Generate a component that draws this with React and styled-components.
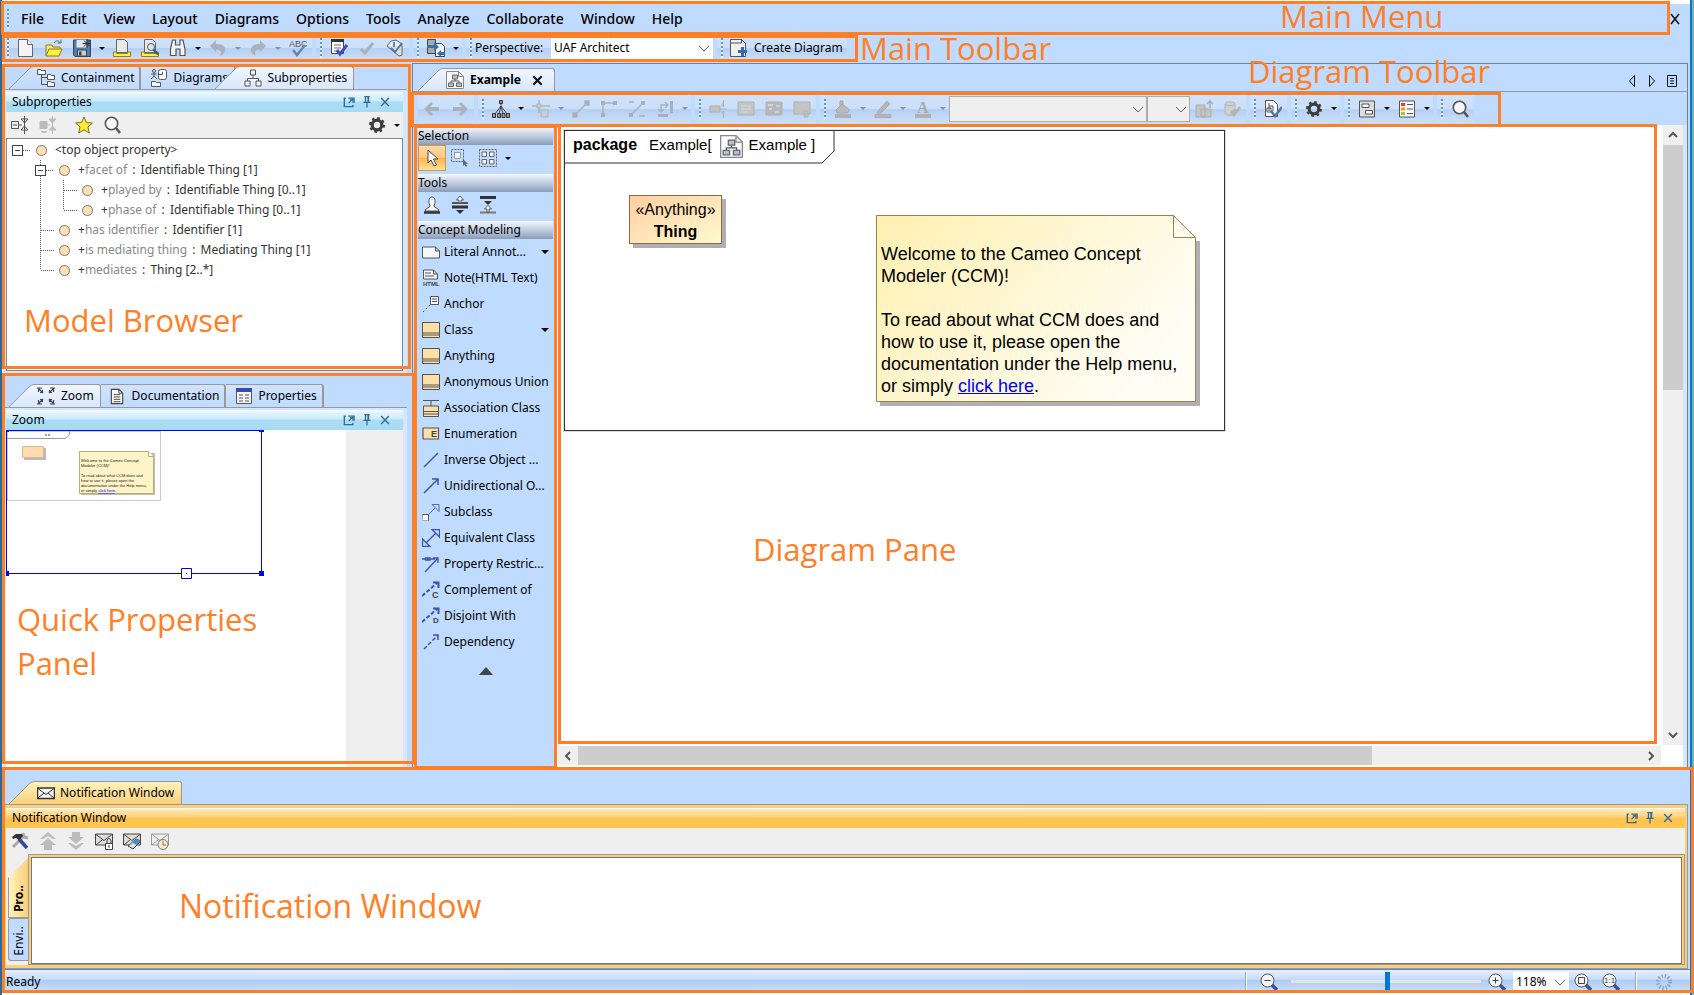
import React from "react";
import styled, { createGlobalStyle, css } from "styled-components";

const ORANGE = "#ff7f27";
const BLUE = "#bfdbff";

const GlobalStyle = createGlobalStyle`
  * {
    box-sizing: border-box;
  }

  body {
    margin: 0;
    background: #fff;
    color: #000;
    font-family: "Noto Sans", "Open Sans", sans-serif;
    font-size: 12px;
    line-height: 16px;
  }

  button, select, input {
    font: inherit;
    color: inherit;
    border-radius: 0;
  }

  svg {
    display: block;
    flex: none;
  }
`;

/* ---------- icons ---------- */

const icons = {
  newFile: (
    <>
      <path d="M1.500 .5h9l5 5v12h-14z" fill="#f4f4f4" stroke="#666" />
      <path d="M10.500 .5v5h5" fill="#fff" stroke="#666" />
    </>
  ),
  open: (
    <>
      <path d="M1 17V6h6l1 2h7v3" fill="#f7ea6a" stroke="#8a7b20" />
      <path d="M1 17l3-7h13l-3 7z" fill="#fff03c" stroke="#8a7b20" />
      <path d="M9 4c2-3 5-3 6 0M12.500 4H16V.5" fill="none" stroke="#666" />
    </>
  ),
  save: (
    <>
      <path d="M.5 1h17v16.500H2L.5 16z" fill="#4d7fb5" stroke="#444" />
      <rect x="3.500" y="1" width="10" height="7.500" fill="#e6e6e6" />
      <rect x="4.500" y="11" width="9" height="6" fill="#ccc" stroke="#444" />
      <rect x="6" y="12.500" width="2.500" height="4" fill="#444" />
      <path d="M14 0v9M9.500 4.500h9M11 1.500l6 6M17 1.500l-6 6" stroke="#333" />
    </>
  ),
  print: (
    <>
      <path d="M3.500 .5h8l3 3v10h-11z" fill="#e9e9e9" stroke="#666" />
      <path d="M.5 13h3v1.500h11V13h3v4.500H.5z" fill="#fff13c" stroke="#8f8420" />
    </>
  ),
  preview: (
    <>
      <path d="M3.500 .5h8l3 3v10h-11z" fill="#e9e9e9" stroke="#666" />
      <path d="M.5 13h3v1.500h11V13h3v4.500H.5z" fill="#fff13c" stroke="#8f8420" />
      <circle cx="10" cy="8" r="3.500" fill="#d5ecff" stroke="#555" />
      <path d="M12.500 10.500l4.500 5" stroke="#34598c" strokeWidth="2.500" />
    </>
  ),
  binoculars: (
    <path
      d="M3.500 1h3v5h4.500V1h3l2 9v6.500h-5V10h-4v6.500H1.500V10z"
      fill="#f4f4f4"
      stroke="#555"
      strokeWidth="1.200"
    />
  ),
  undo: (
    <path d="M1 7l6-6v4c7 0 10 3 9 7-1 3-3 4-5 5 2-3 1-7-4-6.500V13z" fill="#aab2bd" />
  ),
  redo: (
    <path d="M17 7l-6-6v4C4 5 1 8 2 12c1 3 3 4 5 5-2-3-1-7 4-6.500V13z" fill="#aab2bd" />
  ),
  spell: (
    <>
      <text x="0" y="8" fontSize="9" fill="#555" fontFamily="Liberation Sans, sans-serif">ABC</text>
      <path d="M4 11l4 5 8-10" fill="none" stroke="#5e87b5" strokeWidth="2.500" />
    </>
  ),
  notepad: (
    <>
      <path d="M1.500 1.500h12v13h-12z" fill="#fff" stroke="#444" />
      <path d="M1 1.500h13" stroke="#333" strokeWidth="3" />
      <path d="M4 6h7M4 9h7M4 12h4" stroke="#666" />
      <path d="M7 11l3 4 7-9" fill="none" stroke="#3f51c0" strokeWidth="3" />
    </>
  ),
  check: <path d="M3 10l4 4 8-10" fill="none" stroke="#aab2bd" strokeWidth="3" />,
  validate: (
    <>
      <path d="M1 7l4-5 5-1 6 4-1 5-5 3z" fill="#eee" stroke="#666" />
      <path d="M1 7l12 10 3-1V7" fill="#ddd" stroke="#666" />
      <path d="M5 9l4 4 7-9" fill="none" stroke="#4c78a8" strokeWidth="2" />
      <path d="M8 3v5" stroke="#3f51c0" strokeWidth="1.500" />
    </>
  ),
  exchange: (
    <>
      <path d="M.5 .5h8v14h-8z" fill="#aaa" stroke="#444" />
      <path d="M8.500 4.500h6l3 3v10h-9z" fill="#f4f4f4" stroke="#444" />
      <path d="M0 6h7V3l5 5-5 4v-3H0z" fill="#2f74b5" />
      <path d="M18 13h-4v-2l-4 3.500 4 3.500v-2h4z" fill="#2f74b5" />
    </>
  ),
  createDiagram: (
    <>
      <path d="M.5 .5h11l4 4v13H.5z" fill="#eee" stroke="#555" />
      <path d="M.5 4h11V.5l4 4" fill="none" stroke="#555" />
      <path d="M12.500 8v9M8 12.500h9" stroke="#2f6fb0" strokeWidth="3" />
    </>
  ),
  containment: (
    <>
      <path d="M4.500 6v9.500h6M4.500 8.500h6" fill="none" stroke="#555" />
      <path d="M.5 .5h3l1 1h4v4h-8zM10.500 5.500h3l1 1h3v4h-7zM10.500 12.500h3l1 1h3v4h-7z" fill="#fff" stroke="#555" />
    </>
  ),
  diagrams: (
    <>
      <circle cx="4" cy="2" r="1.500" fill="none" stroke="#555" />
      <path d="M4 4v3M1 5h6M1 10l3-3 3 3" fill="none" stroke="#555" />
      <path d="M1.500 12.500h4l1 1h4v4h-9z" fill="#fff" stroke="#555" />
      <rect x="8.500" y=".5" width="8" height="10" rx="2" fill="#fff" stroke="#555" />
      <path d="M8.500 5.500h4V3" fill="none" stroke="#555" />
    </>
  ),
  hierarchy: (
    <path
      d="M6.500 1h5v5h-5zM1 12h5v5H1zM12 12h5v5h-5zM9 6v3.500M3.500 12V9.500h11V12"
      fill="#f4f4f4"
      stroke="#555"
    />
  ),
  collapse: (
    <>
      <path d="M.5 5.500h7v7h-7zM2 9h4M8 9h3" fill="none" stroke="#555" />
      <path d="M13.500 0v18M10 3h7l-3.500 4zM10 14h7l-3.500-4z" fill="#fff" stroke="#555" />
    </>
  ),
  collapseOff: (
    <>
      <path d="M1 5.500h7v7H1zM8 9h3M2 15c2 2 5 2 6 0" fill="#bbb" stroke="#bbb" />
      <path d="M13.500 0v18M10 3h7l-3.500 4zM10 14h7l-3.500-4z" fill="#bbb" stroke="#bbb" />
    </>
  ),
  star: (
    <path
      d="M9 1l2.400 5.600 6 .5-4.500 4 1.400 6L9 13.800 3.700 17l1.400-6-4.500-4 6-.5z"
      fill="#ffeb3b"
      stroke="#76701c"
    />
  ),
  search: (
    <>
      <circle cx="8.500" cy="7.500" r="6.200" fill="#f8f8f8" stroke="#555" strokeWidth="1.600" />
      <path d="M13 12l4 5" stroke="#555" strokeWidth="2.500" />
    </>
  ),
  gear: (
    <>
      <circle cx="9" cy="9" r="4.800" fill="none" stroke="#3d3d3d" strokeWidth="3.200" />
      <circle cx="9" cy="9" r="7" fill="none" stroke="#3d3d3d" strokeWidth="2" strokeDasharray="2.700 2.800" />
    </>
  ),
  zoomArrows: (
    <path
      d="M0 1h5M1.500 1v4M2 2l4 4M3 5.500h2.500V3M18 1h-5M16.500 1v4M16 2l-4 4M15 5.500h-2.500V3M0 17h5M1.500 17v-4M2 16l4-4M3 12.500h2.500V15M18 17h-5M16.500 17v-4M16 16l-4-4M15 12.500h-2.500V15"
      fill="none"
      stroke="#444"
      strokeWidth="1.200"
    />
  ),
  document: (
    <>
      <path d="M2.500 1.500h8l4 4v11h-12z" fill="#f8f8f8" stroke="#444" strokeWidth="1.200" />
      <path d="M10.500 1.500v4h4M5 7h7M5 9.500h7M5 12h7M5 14.500h7" fill="none" stroke="#444" />
    </>
  ),
  propTable: (
    <>
      <path d="M1.500 1.500h15v15h-15z" fill="#f4f4f4" stroke="#555" />
      <path d="M1 3h16" stroke="#3848b0" strokeWidth="4" />
      <path d="M4 8h4M10 8h4M4 11h4M10 11h4M4 14h4M10 14h4" stroke="#555" />
    </>
  ),
  diagramFile: (
    <>
      <path d="M.5 .5h12l5 5v12H.5z" fill="#fafafa" stroke="#888" />
      <path d="M12.500 .5v5h5" fill="none" stroke="#888" />
      <path d="M9 8v2M5 12v-2h8v2" fill="none" stroke="#555" />
      <path d="M6.500 4h5v4h-5zM2.500 12h5v3.500h-5zM10.500 12h5v3.500h-5z" fill="#b9bedb" stroke="#666" />
    </>
  ),
  mail: (
    <>
      <path d="M.5 4h17v10.500H.5z" fill="#f4f4f4" stroke="#333" strokeWidth="1.500" />
      <path d="M1 4.500l8 6 8-6M1 14l6-5M17 14l-6-5" fill="none" stroke="#333" />
    </>
  ),
  mailLock: (
    <>
      <path d="M.5 2h17v11H.5z" fill="#ddd" stroke="#444" />
      <path d="M1 2.500l8 6 8-6M1 13l6-5" fill="none" stroke="#444" />
      <path d="M12 11V9c0-3 4-3 4 0v2" fill="none" stroke="#444" />
      <path d="M10.500 11.500h7v6h-7z" fill="#fff" stroke="#444" />
      <path d="M14 13v3" stroke="#444" />
    </>
  ),
  mailErase: (
    <>
      <path d="M.5 2h17v11H.5z" fill="#ddd" stroke="#444" />
      <path d="M1 2.500l8 6 8-6M1 13l6-5" fill="none" stroke="#444" />
      <path d="M5 14l8-7 5 2-8 8z" fill="#ddd" stroke="#444" />
      <path d="M9 10.500l4-3.500 4.500 2-4 4z" fill="#4a90d0" />
    </>
  ),
  mailClock: (
    <>
      <path d="M.5 2h17v11H.5z" fill="#eee" stroke="#999" />
      <path d="M1 2.500l8 6 8-6M1 13l6-5" fill="none" stroke="#999" />
      <circle cx="12" cy="12.500" r="5" fill="#ffe9c4" stroke="#777" />
      <path d="M12 9v4h3" fill="none" stroke="#777" />
    </>
  ),
  tools: (
    <>
      <path d="M2 15L14 3M12 1l1 4 4 1" stroke="#aaa" strokeWidth="3" fill="none" />
      <path d="M8 7l8 9" stroke="#35489c" strokeWidth="3.500" />
      <path d="M1 5l4-3h6l1 2-4 4-3-2-3 1z" fill="#333" />
    </>
  ),
  upDouble: <path d="M9 0l8 7h-3L9 4 4 7H1zM9 6l8 7h-4v5H5v-5H1z" fill="#bcbcbc" />,
  downDouble: <path d="M9 18l8-7h-3l-5 3-5-3H1zM9 12l8-7h-4V0H5v5H1z" fill="#bcbcbc" />,
  back: <path d="M1 9l7-7 2 2-3 3h9v4H7l3 3-2 2z" fill="#aab2bd" />,
  forward: <path d="M17 9l-7-7-2 2 3 3H2v4h9l-3 3 2 2z" fill="#aab2bd" />,
  layoutTree: (
    <>
      <path d="M9 3v3M9 6L3 14M9 6l-2 8M9 6l2 8M9 6l6 8" stroke="#444" />
      <path d="M7.500 .5h3v3h-3zM.5 13.500h3v4h-3zM5.500 13.500h3v4h-3zM10 13.500h3v4h-3zM14.500 13.500h3v4h-3z" fill="#999" stroke="#333" />
    </>
  ),
  snap: (
    <>
      <path d="M7 0v13M0 6h18" stroke="#aeb4bc" strokeWidth="1.500" />
      <path d="M9 10h7v7H9zM5 4h4v4H5z" fill="#c9ced6" stroke="#aeb4bc" />
    </>
  ),
  lineA: <path d="M3 15L14 4M1 13h4v4H1zM13 1h4v4h-4z" fill="#aab0b8" stroke="#aab0b8" strokeWidth="1.300" />,
  lineB: (
    <>
      <path d="M3 15V3h12" fill="none" stroke="#aab0b8" strokeWidth="1.500" />
      <path d="M1 1h4v4H1zM1 13h4v4H1zM13 1h4v4h-4z" fill="#aab0b8" />
    </>
  ),
  lineC: (
    <>
      <path d="M1 2h5M3 15L14 4M11 16h6" fill="none" stroke="#aab0b8" strokeWidth="1.500" />
      <path d="M1 13h4v4H1zM13 1h4v4h-4z" fill="#aab0b8" />
    </>
  ),
  lineD: (
    <>
      <path d="M5 12V5h6M9 2l3 3-3 3M2 9l3 3 3-3" fill="none" stroke="#aab0b8" strokeWidth="1.300" />
      <path d="M2 15.500h10M15.500 1v12" stroke="#aab0b8" strokeWidth="3" />
    </>
  ),
  resize: <path d="M1 6h10v6H1zM11 9h7M14.500 0v7l-2-2M14.500 18v-7l-2 2" fill="#c2c2c2" stroke="#b0b0b0" />,
  boxLines: (
    <>
      <path d="M1 2h16v13H1z" fill="#c4c4c4" stroke="#b0b0b0" />
      <path d="M4 6h10M4 9h10M4 12h7" stroke="#dadada" />
    </>
  ),
  boxImage: (
    <>
      <path d="M1 2h16v13H1z" fill="#b8b8b8" stroke="#b0b0b0" />
      <path d="M3 5h5M11 6h4M4 9h3M10 12h4" stroke="#d4d4d4" strokeWidth="2" />
    </>
  ),
  boxCorner: <path d="M1 2h16v12H1zM11 11h4v6h-4z" fill="#c4c4c4" stroke="#b0b0b0" />,
  bucket: (
    <>
      <path d="M2 10l6-6 8 6-3 3H3zM6 7V1h3v5" fill="#bcbcbc" stroke="#a8a8a8" />
      <path d="M1 14h16v4H1z" fill="#b0b0b0" />
    </>
  ),
  pen: <path d="M4 11L13 1l3 3-9 9H3zM1 14.500h16v3H1z" fill="#b6b6b6" stroke="#acacac" />,
  fontColor: (
    <>
      <path d="M1 14h16v4H1z" fill="#b0b0b0" />
      <text x="3" y="13" fontSize="16" fontWeight="700" fill="#a8a8a8" fontFamily="Liberation Serif, serif">A</text>
    </>
  ),
  copyStyle: (
    <>
      <path d="M1 5h9v12H1zM6 9h10v8H6z" fill="#c4c4c4" stroke="#acacac" />
      <path d="M15 8V2M12 4l3-3 3 3" fill="none" stroke="#acacac" strokeWidth="1.500" />
    </>
  ),
  pasteStyle: (
    <>
      <path d="M2 4c0-3 10-3 10 0v9c0 3-10 3-10 0z" fill="#d0d0d0" stroke="#b4b4b4" />
      <path d="M2 4c0 2 10 2 10 0" fill="none" stroke="#b4b4b4" />
      <path d="M7 12l4-3 2 1 3-4 2 2-3 4-4 5z" fill="#b4b4b4" />
    </>
  ),
  docCheck: (
    <>
      <path d="M1.500 .5h8l4 4v12h-12z" fill="#f7f7f7" stroke="#555" />
      <path d="M5 3v8M5 6h4v5M3 8h4v4H3z" fill="none" stroke="#555" />
      <path d="M7 11l4 5 7-9" fill="none" stroke="#4f79a8" strokeWidth="2.500" />
    </>
  ),
  panes: (
    <>
      <path d="M1.500 1h15v16h-15z" fill="#ddd" stroke="#555" />
      <path d="M4 4h7v3.500H4zM7.500 10.500h7V14h-7z" fill="#fff" stroke="#555" />
    </>
  ),
  legend: (
    <>
      <path d="M1.500 1h15v16h-15z" fill="#fafafa" stroke="#555" />
      <path d="M3 4.500h4" stroke="#f33" strokeWidth="3" />
      <path d="M3 9h4" stroke="#f90" strokeWidth="3" />
      <path d="M3 13.500h4" stroke="#9c3" strokeWidth="3" />
      <path d="M9 4.500h6M9 9h6M9 13.500h6" stroke="#555" />
    </>
  ),
  cursor: <path d="M5 1v13l3-3 3 6 2.500-1-3-6H15z" fill="#fff" stroke="#444" />,
  marquee: (
    <>
      <path d="M.5 .5h12v12H.5z" fill="none" stroke="#666" strokeDasharray="2 1" />
      <path d="M3.500 3.500h6v6h-6z" fill="#f4f4f4" stroke="#999" />
      <path d="M12 10v7l1.500-1.500L15 18l1-1-1-2h2z" fill="#666" />
    </>
  ),
  marqueeAll: (
    <>
      <path d="M.5 .5h17v17H.5z" fill="none" stroke="#666" strokeDasharray="2 1" />
      <path d="M3 3h4.500v4.500H3zM10.500 3H15v4.500h-4.500zM3 10.500h4.500V15H3zM10.500 10.500H15V15h-4.500z" fill="#f4f4f4" stroke="#666" />
    </>
  ),
  stamp: (
    <>
      <path d="M7 10c-5-12 9-12 4 0 0 2 5 2 5 5H2c0-3 5-3 5-5z" fill="#f4f4f4" stroke="#555" />
      <path d="M1 16.500h16" stroke="#333" strokeWidth="2.500" />
    </>
  ),
  spread: (
    <>
      <path d="M1 7h16" stroke="#555" strokeWidth="2" />
      <path d="M1 11h16" stroke="#333" strokeWidth="3" />
      <path d="M9 0L5.500 4H8v3h2V4h2.500z" fill="#fff" stroke="#555" />
      <path d="M5 14h8l-4 4z" fill="#333" />
    </>
  ),
  shrink: (
    <>
      <path d="M1 1.500h16" stroke="#333" strokeWidth="3" />
      <path d="M1 16.500h16" stroke="#777" strokeWidth="2" />
      <path d="M5 5h8L9 9z" fill="#333" />
      <path d="M9 9.500L5.500 13H8v3h2v-3h2.500z" fill="#fff" stroke="#555" />
    </>
  ),
  literal: <path d="M.5 4h13l4 4v7H.5zM13.500 4v4h4" fill="#f7f7f7" stroke="#555" />,
  htmlNote: (
    <>
      <path d="M1.500 1h10l4 4v5h-14zM11.500 1v4h4M3 4h6M3 7h9" fill="#f7f7f7" stroke="#555" />
      <text x="1" y="17" fontSize="6" fontWeight="700" fill="#444" fontFamily="Liberation Sans, sans-serif">HTML</text>
    </>
  ),
  anchor: (
    <>
      <path d="M8.500 1.500h8v8h-8zM10 4h5M10 6.500h5" fill="#f7f7f7" stroke="#555" />
      <path d="M1 17l8-8" stroke="#555" strokeDasharray="2 2" />
    </>
  ),
  classBox: (
    <>
      <path d="M.5 1.500h17v15H.5z" fill="#ffdfa8" stroke="#555" />
      <path d="M0 12h18M0 14h18" stroke="#555" />
    </>
  ),
  assocClass: (
    <>
      <path d="M1.500 7h15v10.500h-15z" fill="#ffdfa8" stroke="#555" />
      <path d="M1 12.500h16M1 15h16M1 1.500h16M9 1v6" stroke="#555" />
    </>
  ),
  enumeration: (
    <>
      <path d="M1 3h15.500v11H1z" fill="#ffdfa8" stroke="#555" strokeWidth="1.200" />
      <text x="9" y="12" fontSize="9" fontWeight="700" fill="#444" fontFamily="Liberation Sans, sans-serif">E</text>
    </>
  ),
  line: <path d="M2 16L16 2" stroke="#3f51b5" strokeWidth="1.500" />,
  arrow: <path d="M2 16L16 2M10 2h6v6" fill="none" stroke="#3f51b5" strokeWidth="1.500" />,
  subclass: (
    <>
      <path d="M5 13l8-8M10 1.500h7v7z" fill="none" stroke="#5565c0" />
      <path d="M.5 11.500h6v6h-6z" fill="#fff" stroke="#aaa" />
      <path d="M.5 11.500h6v6" fill="none" stroke="#555" />
    </>
  ),
  equivalent: <path d="M4 14L14 4M10 .5h7.500V8zM.5 10v7.500H8z" fill="none" stroke="#3f51b5" strokeWidth="1.300" />,
  restriction: <path d="M3 17L16 3M11 3h5v5M0 4h3M8 4h5M3.500 3h2v2h-2zM6 3h2v2H6z" fill="none" stroke="#3f51b5" strokeWidth="1.300" />,
  complement: (
    <>
      <path d="M0 15L15 2" stroke="#3f51b5" strokeWidth="2" strokeDasharray="4 2" />
      <path d="M11 1.500h5.500V7" fill="none" stroke="#3f51b5" strokeWidth="2" />
      <text x="10" y="17" fontSize="9" fontWeight="700" fill="#444" fontFamily="Liberation Sans, sans-serif">C</text>
    </>
  ),
  disjoint: (
    <>
      <path d="M0 15L15 2" stroke="#3f51b5" strokeWidth="2" strokeDasharray="4 2" />
      <path d="M11 1.500h5.500V7" fill="none" stroke="#3f51b5" strokeWidth="2" />
      <text x="11" y="16" fontSize="8" fontWeight="700" fill="#444" fontFamily="Liberation Sans, sans-serif">D</text>
    </>
  ),
  dependency: (
    <>
      <path d="M2 16L16 2" stroke="#3f51b5" strokeWidth="1.500" strokeDasharray="4 2" />
      <path d="M11 2h5v5" fill="none" stroke="#3f51b5" strokeWidth="1.500" />
    </>
  ),
  zoomOut: (
    <>
      <path d="M12 12l5 5" stroke="#3f51a0" strokeWidth="3.500" />
      <circle cx="7.500" cy="7.500" r="6.500" fill="#f4f4f4" stroke="#555" />
      <path d="M4.500 7.500h6" stroke="#444" />
    </>
  ),
  zoomIn: (
    <>
      <path d="M12 12l5 5" stroke="#3f51a0" strokeWidth="3.500" />
      <circle cx="7.500" cy="7.500" r="6.500" fill="#f4f4f4" stroke="#555" />
      <path d="M4.500 7.500h6M7.500 4.500v6" stroke="#444" />
    </>
  ),
  zoomFit: (
    <>
      <path d="M12 12l5 5" stroke="#3f51a0" strokeWidth="3.500" />
      <circle cx="7.500" cy="7.500" r="6.500" fill="#f4f4f4" stroke="#555" />
      <path d="M4.500 4.500h6v6h-6z" fill="none" stroke="#444" />
    </>
  ),
  zoomReal: (
    <>
      <path d="M12 12l5 5" stroke="#3f51a0" strokeWidth="3.500" />
      <circle cx="7.500" cy="7.500" r="6.500" fill="#f4f4f4" stroke="#555" />
      <text x="2" y="10" fontSize="8" fill="#444" fontFamily="Liberation Sans, sans-serif">1:1</text>
    </>
  ),
  spinner: (
    <circle cx="9" cy="9" r="6" fill="none" stroke="#8a9bb8" strokeWidth="4" strokeDasharray="1.200 1.950" />
  ),
  float: (
    <>
      <path d="M5 4H3v11h11v-2" fill="none" stroke="#2f6d98" strokeWidth="1.800" />
      <path d="M8 4h7.500v6" fill="none" stroke="#2f6d98" strokeWidth="1.800" />
      <path d="M8.500 10.500L14 5M10 6h4v4" stroke="#1f5d88" strokeWidth="1.300" fill="none" />
    </>
  ),
  pin: (
    <>
      <path d="M5.500 2h7M7 2v7M11 2v7M4.500 9.500h9M9 10v6" stroke="#2f6d98" strokeWidth="1.600" />
      <path d="M9.500 2h2v7h-2z" fill="#2f6d98" />
    </>
  ),
  close: <path d="M4 4l10 10M14 4L4 14" stroke="#2f6d98" strokeWidth="1.800" />,
  closeBold: <path d="M4 4l10 10M14 4L4 14" stroke="#111" strokeWidth="2.500" />,
  closeBlack: <path d="M5 4l8 10M13 4L5 14" stroke="#111" strokeWidth="1.500" />,
  prevTab: <path d="M11.500 3.500v11L6.500 9z" fill="none" stroke="#111" />,
  nextTab: <path d="M6.500 3.500v11L11.500 9z" fill="none" stroke="#111" />,
  listTabs: <path d="M4.500 3.500h9v11h-9zM7 6.500h4M7 9h4M7 11.500h4" fill="none" stroke="#111" />,
  up: <path d="M5 11l4-4 4 4" fill="none" stroke="#555" strokeWidth="2" />,
  down: <path d="M5 7l4 4 4-4" fill="none" stroke="#555" strokeWidth="2" />,
  left: <path d="M11 5L7 9l4 4" fill="none" stroke="#555" strokeWidth="2" />,
  right: <path d="M7 5l4 4-4 4" fill="none" stroke="#555" strokeWidth="2" />,
  chevron: <path d="M4 7l5 5 5-5" fill="none" stroke="#666" />,
};

const Icon = ({ name, size = 18 }) => (
  <svg width={size} height={size} viewBox="0 0 18 18" aria-hidden="true">
    {icons[name]}
  </svg>
);

/* ---------- shared parts ---------- */

const Desktop = styled.div`
  display: flex;
  flex-direction: column;
  min-height: 100vh;
  padding: 4px 4px 2px 3px;
  background: linear-gradient(to right, #2f6a96 2px, #fff 2px, #fff calc(100% - 4px), #0078d7 calc(100% - 4px), #0078d7 calc(100% - 2px), #7bb0a8 calc(100% - 2px));
`;

// Orange outline drawn over a region of the window.
const Marker = styled.div`
  position: absolute;
  z-index: 5;
  top: ${(p) => p.$top || 0}px;
  right: ${(p) => (p.$width ? "auto" : `${p.$right || 0}px`)};
  bottom: ${(p) => p.$bottom || 0}px;
  left: ${(p) => p.$left || 0}px;
  width: ${(p) => (p.$width ? `${p.$width}px` : "auto")};
  border: 3px solid ${ORANGE};
  pointer-events: none;
`;

const Label = styled.div`
  position: absolute;
  z-index: 6;
  top: ${(p) => p.$top}px;
  left: ${(p) => p.$left};
  color: ${ORANGE};
  font-family: "Open Sans", "Noto Sans", sans-serif;
  font-size: ${(p) => p.$size || 31}px;
  line-height: ${(p) => p.$line || 32}px;
  white-space: nowrap;
  pointer-events: none;
`;

const plainButton = css`
  display: flex;
  align-items: center;
  padding: 0;
  border: 0;
  background: none;
`;

const IconButton = styled.button`
  ${plainButton}
  flex: none;
  justify-content: center;
  width: ${(p) => p.$width || 28}px;
  height: 26px;
`;

const CaretButton = styled.button`
  ${plainButton}
  flex: none;
  justify-content: center;
  width: 12px;
  height: 26px;

  &::before {
    content: "";
    border: 3px solid transparent;
    border-top-color: ${(p) => (p.disabled ? "#8a93a0" : "#000")};
    border-bottom: 0;
  }
`;

const Grip = styled.span`
  flex: none;
  width: ${(p) => p.$width || 9}px;
  height: 20px;
  background: repeating-linear-gradient(#5b93cf 0 2px, #e4f0ff 2px 4px) 4px 0 / 2px 20px no-repeat;
`;

const ToolGroup = styled.div`
  display: flex;
  align-items: center;
  height: ${(p) => p.$height || 26}px;
  background: linear-gradient(#d0e2fb 0%, #cbdff9 50%, #b5d0f3 52%, #cbdff9 100%);
`;

const SelectBox = styled.span`
  display: grid;
  align-items: center;
  width: ${(p) => p.$width}px;
  height: ${(p) => p.$height || 24}px;

  select, svg {
    grid-area: 1 / 1;
  }

  select {
    appearance: none;
    width: 100%;
    height: 100%;
    padding: 0 2px;
    border: 1px solid ${(p) => (p.$off ? "#adadad" : "#fff")};
    background: ${(p) => (p.$off ? "#efefef" : "#fff")};
    opacity: 1;
  }

  svg {
    justify-self: end;
    pointer-events: none;
  }
`;

const ToolButtons = ({ items }) =>
  items.map(([name, label, caret, off]) => (
    <React.Fragment key={label}>
      <IconButton aria-label={label} disabled={off}>
        <Icon name={name} />
      </IconButton>
      {caret && <CaretButton aria-label={`${label} options`} disabled={off} />}
    </React.Fragment>
  ));

/* ---------- menu and main toolbar ---------- */

const MenuBar = styled.nav`
  position: relative;
  display: flex;
  align-items: center;
  gap: 1px;
  height: 31px;
  padding: 0 6px 2px 0;
  background: ${BLUE};
`;

const MenuItem = styled.button`
  ${plainButton}
  padding: 0 8px;
  height: 26px;
  font-size: 14px;
  font-weight: 500;
`;

const Spacer = styled.span`
  flex: 1;
`;

const MainToolbar = styled.div`
  position: relative;
  display: flex;
  align-items: center;
  gap: 4px;
  height: 28px;
  padding-bottom: 2px;
  background: ${BLUE};
`;

const PerspectiveLabel = styled.label`
  width: 76px;
`;

const TextButton = styled.button`
  ${plainButton}
  gap: 6px;
  height: 26px;
  padding: 0 4px 0 1px;
`;

const menus = ["File", "Edit", "View", "Layout", "Diagrams", "Options", "Tools", "Analyze", "Collaborate", "Window", "Help"];

const Menu = () => (
  <MenuBar>
    <Grip />
    {menus.map((name) => (
      <MenuItem key={name}>{name}</MenuItem>
    ))}
    <Spacer />
    <IconButton aria-label="Close" $width={18}>
      <Icon name="closeBlack" />
    </IconButton>
    <Marker $top={-3} $right={20} $left={-2} />
    <Label $top={-4} $left="calc(100% - 410px)">Main Menu</Label>
  </MenuBar>
);

const Toolbar = () => (
  <MainToolbar>
    <ToolGroup>
      <Grip />
      <ToolButtons
        items={[
          ["newFile", "New Project"],
          ["open", "Open Project"],
          ["save", "Save", true],
          ["print", "Print"],
          ["preview", "Print Preview"],
          ["binoculars", "Find", true],
          ["undo", "Undo", true, true],
          ["redo", "Redo", true, true],
          ["spell", "Check Spelling"],
        ]}
      />
    </ToolGroup>
    <ToolGroup>
      <Grip />
      <ToolButtons items={[["notepad", "Validation"], ["check", "Apply", false, true], ["validate", "Validate Diagram"]]} />
    </ToolGroup>
    <ToolGroup>
      <Grip />
      <ToolButtons items={[["exchange", "Exchange", true]]} />
    </ToolGroup>
    <ToolGroup>
      <Grip />
      <PerspectiveLabel htmlFor="perspective">Perspective:</PerspectiveLabel>
      <SelectBox $width={162}>
        <select id="perspective">
          <option>UAF Architect</option>
        </select>
        <Icon name="chevron" />
      </SelectBox>
    </ToolGroup>
    <ToolGroup>
      <Grip $width={12} />
      <TextButton>
        <Icon name="createDiagram" />
        Create Diagram
      </TextButton>
    </ToolGroup>
    <Marker $left={-1} $bottom={1} $width={856} />
    <Label $top={-3} $left="857px">Main Toolbar</Label>
  </MainToolbar>
);

/* ---------- tabs and panels ---------- */

const TabStrip = styled.div`
  display: flex;
  align-items: flex-end;
  height: ${(p) => p.$height || 26}px;
  padding-left: 4px;
  background: ${BLUE};
`;

const SlantTabRoot = styled.div`
  display: flex;
  flex: none;
  position: relative;
  margin-left: ${(p) => p.$shift || 0}px;
`;

const tabFills = {
  on: "linear-gradient(#f0f6ff, #d8e7fc)",
  off: `linear-gradient(#d0e3fc, ${BLUE})`,
  warm: "linear-gradient(#fff3bd, #f8cf7a)",
};

const TabBody = styled.button`
  ${plainButton}
  flex: none;
  gap: ${(p) => p.$gap || 6}px;
  height: 23px;
  padding: 0 ${(p) => p.$end || 6}px 0 ${(p) => p.$start || 4}px;
  border-top: 1px solid #999;
  border-right: ${(p) => (p.$fill === "off" ? 2 : 1)}px solid #999;
  border-top-right-radius: 3px;
  background: ${(p) => tabFills[p.$fill]};
  font-weight: ${(p) => (p.$bold ? 700 : 400)};
  white-space: nowrap;
  overflow: hidden;
  ${(p) => p.$width && `width: ${p.$width}px;`}
`;

const slantStops = {
  on: ["#f0f6ff", "#d8e7fc"],
  off: ["#d0e3fc", BLUE],
  warm: ["#fff3bd", "#f8cf7a"],
};

const SlantTab = ({ fill, shift, children, ...rest }) => (
  <SlantTabRoot $shift={shift}>
    <svg width="26" height="23" viewBox="0 0 26 23">
      <defs>
        <linearGradient id={`slant-${fill}`} x1="0" y1="0" x2="0" y2="1">
          <stop offset="0" stopColor={slantStops[fill][0]} />
          <stop offset="1" stopColor={slantStops[fill][1]} />
        </linearGradient>
      </defs>
      <path d="M1 23L21 3Q23.500 .5 26 .5V23z" fill={`url(#slant-${fill})`} />
      <path d="M1 23L21 3Q23.500 .5 26 .5" fill="none" stroke="#999" />
    </svg>
    <TabBody $fill={fill} {...rest}>
      {children}
    </TabBody>
  </SlantTabRoot>
);

const PanelFrame = styled.div`
  display: flex;
  flex: 1;
  flex-direction: column;
  min-height: 0;
  padding: 2px 4px 2px 2px;
  border-top: 1px solid #999;
  background: #d6e6fd;
`;

const PanelHeader = styled.header`
  display: flex;
  align-items: center;
  flex: none;
  height: 20px;
  padding: 0 ${(p) => (p.$warm ? 8 : 9)}px 0 6px;
  background: ${(p) =>
    p.$warm
      ? "linear-gradient(#fff 0, #ffe6b4 2px, #ffd27a 45%, #ffc350 50%, #ffc650)"
      : "linear-gradient(#fff 0, #e3f4fd 2px, #cdebfa 45%, #a9ddf7 50%, #a8dbf3)"};
`;

const HeaderTools = () => (
  <>
    <Spacer />
    {["float", "pin", "close"].map((name) => (
      <IconButton key={name} aria-label={name} $width={18}>
        <Icon name={name} size={14} />
      </IconButton>
    ))}
  </>
);

const IconRow = styled.div`
  display: flex;
  align-items: center;
  flex: none;
  height: 26px;
  background: #efefef;
`;

const SideColumn = styled.aside`
  display: flex;
  flex: none;
  flex-direction: column;
  width: 409px;
  background: ${BLUE};
`;

const ModelBrowser = styled.section`
  position: relative;
  display: flex;
  flex-direction: column;
  height: 310px;
  padding: 0 5px 0 1px;
`;

const QuickProperties = styled.section`
  position: relative;
  display: flex;
  flex: 1;
  flex-direction: column;
  padding: 8px 5px 0 1px;
`;

/* ---------- model tree ---------- */

const Tree = styled.ul`
  flex: 1;
  margin: 0;
  padding: 1px 0 0 5px;
  border: 1px solid #828790;
  background: #fff;
  list-style: none;
`;

const Branch = styled.ul`
  margin: 0;
  padding: 0 0 0 23px;
  list-style: none;
`;

const TreeItem = styled.li`
  ${(p) =>
    p.$joined &&
    css`
      background: repeating-linear-gradient(#555 0 1px, transparent 1px 2px) 5px 0 / 1px ${p.$last ? "10px" : "100%"} no-repeat;
    `}
`;

const TreeRow = styled.div`
  display: flex;
  align-items: center;
  height: 20px;
  color: #333;
  white-space: pre;
`;

const Twisty = styled.span`
  display: grid;
  flex: none;
  place-items: center;
  width: 11px;
  height: 11px;
  ${(p) =>
    p.$open &&
    css`
      border: 1px solid #444;
      background: linear-gradient(#444, #444) center / 5px 1px no-repeat #fff;
    `}
`;

const Twig = styled.span`
  flex: none;
  width: ${(p) => (p.$open ? 8 : 13)}px;
  height: 1px;
  margin-left: ${(p) => (p.$open ? 0 : -5)}px;
  margin-right: 5px;
  background: repeating-linear-gradient(to right, #555 0 1px, transparent 1px 2px);
`;

const Dot = styled.span`
  flex: none;
  width: 11px;
  height: 11px;
  margin-right: 8px;
  border: 1px solid #777;
  border-radius: 50%;
  background: #ffe0b5;
`;

const Role = styled.span`
  margin-right: 2px;
  color: #888;
`;

const RoleType = styled.span`
  margin-left: 2px;
`;

const tree = [
  { name: "facet of", type: "Identifiable Thing [1]", children: [
    { name: "played by", type: "Identifiable Thing [0..1]" },
    { name: "phase of", type: "Identifiable Thing [0..1]" },
  ] },
  { name: "has identifier", type: "Identifier [1]" },
  { name: "is mediating thing", type: "Mediating Thing [1]" },
  { name: "mediates", type: "Thing [2..*]" },
];

const TreeNodes = ({ nodes }) => (
  <Branch>
    {nodes.map((node, index) => (
      <TreeItem key={node.name} $joined $last={index === nodes.length - 1}>
        <TreeRow>
          <Twisty $open={!!node.children} />
          <Twig $open={!!node.children} />
          <Dot />
          +<Role>{node.name}</Role> : <RoleType>{node.type}</RoleType>
        </TreeRow>
        {node.children && <TreeNodes nodes={node.children} />}
      </TreeItem>
    ))}
  </Branch>
);

/* ---------- zoom preview ---------- */

const ZoomArea = styled.div`
  flex: 1;
  padding-right: 57px;
  background: linear-gradient(to left, #efefef 57px, #fff 57px);
`;

const previewLines = [
  "Welcome to the Cameo Concept",
  "Modeler (CCM)!",
  "",
  "To read about what CCM does and",
  "how to use it, please open the",
  "documentation under the Help menu,",
];

const ZoomPreview = () => (
  <svg width="260" height="150" viewBox="0 0 260 150">
    <path d="M1.500 1.500h153v69h-153z" fill="#fff" stroke="#ccc" />
    <path d="M1.500 8.500h58l4-4v-3" fill="none" stroke="#999" />
    <path d="M39 5h5" stroke="#444" strokeDasharray="2 1" />
    <path d="M18 18h22v12H18z" fill="#bbb" />
    <path d="M16.500 16.500h21v11h-21z" fill="#ffdcae" stroke="#e0b68d" />
    <path d="M75 23h74v42H75z" fill="#bbb" />
    <path d="M73.500 21.500h69l5 5v37h-74z" fill="#fff3c8" stroke="#b8ae7a" />
    <path d="M142.500 21.500v5h5" fill="#fff" stroke="#b8ae7a" />
    <g fontFamily="Liberation Sans, sans-serif" fontSize="4" fill="#222">
      {previewLines.map((line, index) => (
        <text key={index} x="75" y={32 + index * 5}>{line}</text>
      ))}
      <text x="75" y="62">or simply <tspan fill="#00f" textDecoration="underline">click here</tspan>.</text>
    </g>
    <path d="M.5 .5h255v143H.5z" fill="none" stroke="#00f" />
    <path d="M0 0h3v2H0zM253 0h5v2h-5zM0 141h3v5H0zM253 141h5v5h-5z" fill="#00f" />
    <path d="M175.500 138.500h10v10h-10z" fill="#fff" stroke="#00f" />
    <path d="M180 143h1v1h-1z" fill="#00f" />
  </svg>
);

const LeftColumn = () => (
  <SideColumn>
    <ModelBrowser>
      <TabStrip>
        <SlantTab fill="off" $start={3} $end={4}>
          <Icon name="containment" />
          Containment
        </SlantTab>
        <TabBody $fill="off" $start={9} $width={95}>
          <Icon name="diagrams" />
          Diagrams
        </TabBody>
        <SlantTab fill="on" shift={-22} $start={4}>
          <Icon name="hierarchy" />
          Subproperties
        </SlantTab>
      </TabStrip>
      <PanelFrame>
        <PanelHeader>
          Subproperties
          <HeaderTools />
        </PanelHeader>
        <IconRow>
          <ToolButtons items={[["collapse", "Collapse"], ["collapseOff", "Collapse Selected", false, true]]} />
          <IconButton aria-label="Favorites" $width={44}>
            <Icon name="star" />
          </IconButton>
          <IconButton aria-label="Search" $width={12}>
            <Icon name="search" />
          </IconButton>
          <Spacer />
          <ToolButtons items={[["gear", "Options", true]]} />
        </IconRow>
        <Tree>
          <TreeItem>
            <TreeRow>
              <Twisty $open />
              <Twig $open />
              <Dot />
              {"<top object property>"}
            </TreeRow>
            <TreeNodes nodes={tree} />
          </TreeItem>
        </Tree>
      </PanelFrame>
      <Marker $top={1} $right={1} $bottom={4} $left={-1} />
      <Label $top={241} $left="21px">Model Browser</Label>
    </ModelBrowser>
    <QuickProperties>
      <TabStrip>
        <SlantTab fill="on" $start={3}>
          <Icon name="zoomArrows" />
          Zoom
        </SlantTab>
        <TabBody $fill="off" $start={8} $end={5}>
          <Icon name="document" size={17} />
          Documentation
        </TabBody>
        <TabBody $fill="off" $start={9} $end={5} $gap={5}>
          <Icon name="propTable" />
          Properties
        </TabBody>
      </TabStrip>
      <PanelFrame>
        <PanelHeader>
          Zoom
          <HeaderTools />
        </PanelHeader>
        <ZoomArea>
          <ZoomPreview />
        </ZoomArea>
      </PanelFrame>
      <Marker $right={-3} $bottom={6} $left={-1} />
      <Label $top={224} $left="14px" $line={44}>
        Quick Properties
        <br />
        Panel
      </Label>
    </QuickProperties>
  </SideColumn>
);

/* ---------- diagram area ---------- */

const Workspace = styled.main`
  display: flex;
  flex: 1;
  background: ${BLUE};
`;

const DiagramWindow = styled.section`
  display: flex;
  flex: 1;
  flex-direction: column;
  min-width: 0;
  margin-right: 2px;
  border: 1px solid #777f8a;
`;

const TabTools = styled.div`
  display: flex;
  flex: 1;
  align-items: center;
  justify-content: flex-end;
  gap: 2px;
  height: 20px;
  padding-right: 6px;
`;

const DiagramToolbar = styled.div`
  position: relative;
  display: flex;
  align-items: center;
  gap: 4px;
  height: 34px;
  padding: 0 4px 0 5px;
  border-top: 1px solid #999;
  background: ${BLUE};
`;

const DiagramBody = styled.div`
  display: flex;
  flex: 1;
  border-right: 4px solid #d6e6fd;
  background: #fff;
`;

const Palette = styled.div`
  position: relative;
  flex: none;
  width: 144px;
  padding: 2px 4px 0 5px;
  background: ${BLUE};
`;

const PaletteTitle = styled.h2`
  height: 18px;
  margin: 0;
  background: linear-gradient(#f4f8fd, #c0cde0 50%, #8b9cb8);
  font-size: 12px;
  font-weight: 400;
  line-height: 18px;
`;

const PaletteTools = styled.div`
  display: flex;
  align-items: flex-start;
  height: 29px;
`;

const SelectTool = styled(IconButton)`
  border: 1px solid #c49a55;
  background: linear-gradient(#ffd9a8, #ffc67a 50%, #ffb54a 52%, #ffe09a);
`;

const PaletteItem = styled.button`
  ${plainButton}
  gap: 4px;
  width: 100%;
  height: 26px;
  padding-left: 4px;
  text-align: left;
  white-space: nowrap;
`;

const ItemCaret = styled.span`
  margin: 0 4px 0 auto;
  border: 4px solid transparent;
  border-top-color: #000;
  border-bottom: 0;
`;

const MoreButton = styled.button`
  ${plainButton}
  justify-content: center;
  width: 100%;
  height: 32px;

  &::before {
    content: "";
    border: 7px solid transparent;
    border-top: 0;
    border-bottom: 8px solid #444;
  }
`;

const paletteItems = [
  ["literal", "Literal Annot...", true],
  ["htmlNote", "Note(HTML Text)"],
  ["anchor", "Anchor"],
  ["classBox", "Class", true],
  ["classBox", "Anything"],
  ["classBox", "Anonymous Union"],
  ["assocClass", "Association Class"],
  ["enumeration", "Enumeration"],
  ["line", "Inverse Object ..."],
  ["arrow", "Unidirectional O..."],
  ["subclass", "Subclass"],
  ["equivalent", "Equivalent Class"],
  ["restriction", "Property Restric..."],
  ["complement", "Complement of"],
  ["disjoint", "Disjoint With"],
  ["dependency", "Dependency"],
];

const CanvasColumn = styled.div`
  display: flex;
  flex: 1;
  flex-direction: column;
  min-width: 0;
  background: #fff;
`;

const Canvas = styled.div`
  position: relative;
  flex: 1;
  background: #fff;
  font-family: "Liberation Sans", Arial, sans-serif;
`;

const DiagramFrame = styled.div`
  position: absolute;
  top: 5px;
  left: 7px;
  width: 661px;
  height: 301px;
  border: 1px solid #333;
  box-shadow: 0 0 0 1px #ddd;
`;

const FrameTitle = styled.div`
  display: grid;
  width: 270px;
  height: 33px;

  > * {
    grid-area: 1 / 1;
  }
`;

const FrameText = styled.div`
  display: flex;
  align-items: center;
  height: 28px;
  padding-left: 8px;
  font-size: 15px;
  white-space: pre;

  svg {
    margin: 2px 6px 0 8px;
  }
`;

const FrameKind = styled.b`
  margin-right: 12px;
  font-size: 16px;
`;

const ClassNode = styled.div`
  position: absolute;
  top: 70px;
  left: 72px;
  display: flex;
  flex-direction: column;
  align-items: center;
  width: 93px;
  height: 49px;
  padding-top: 3px;
  border: 1px solid #8c6a48;
  background: linear-gradient(to right bottom, #ffcfa0, #fffad0);
  box-shadow: 4px 4px 0 #b0b0b0;
  font-size: 16px;
  line-height: 22px;
`;

const NoteNode = styled.div`
  position: absolute;
  top: 90px;
  left: 319px;
  display: grid;
  width: 320px;
  height: 187px;

  > * {
    grid-area: 1 / 1;
  }
`;

const NoteText = styled.p`
  margin: 0;
  padding: 28px 0 0 5px;
  font-size: 18px;
  line-height: 22px;
  white-space: nowrap;

  a {
    color: #00f;
  }
`;

const VerticalScroll = styled.div`
  display: flex;
  flex: none;
  flex-direction: column;
  align-items: center;
  width: 20px;
  margin: 0 0 24px;
  background: #efefef;

  &::after {
    content: "";
    width: 100%;
    flex: 0 0 245px;
    order: 1;
    background: #cdcdcd;
  }

  button {
    height: 20px;
  }

  button:last-child {
    order: 3;
    margin-top: auto;
  }
`;

const HorizontalScroll = styled.div`
  display: flex;
  flex: none;
  align-items: center;
  height: 19px;
  margin: 2px 2px 4px 1px;
  background: #efefef;

  &::after {
    content: "";
    order: 1;
    width: 72%;
    height: 100%;
    background: #cdcdcd;
  }

  button:last-child {
    order: 3;
    margin-left: auto;
  }
`;

const diagramTools = [
  [["layoutTree", "Layout", true], ["snap", "Snap", true, true], ["lineA", "Oblique Path", false, true], ["lineB", "Rectilinear Path", false, true], ["lineC", "Bezier Path", false, true], ["lineD", "Reset Path", true, true]],
  [["resize", "Autosize", false, true], ["boxLines", "Show Attributes", false, true], ["boxImage", "Show Image", false, true], ["boxCorner", "Show Parts", false, true]],
];

const trailingTools = [
  [["docCheck", "Check Document"]],
  [["gear", "Settings", true]],
  [["panes", "Panes", true], ["legend", "Legend", true]],
  [["search", "Find in Diagram"]],
];

const DiagramArea = () => (
  <DiagramWindow>
    <TabStrip $height={27}>
      <SlantTab fill="on" $bold $start={3} $end={9}>
        <Icon name="diagramFile" />
        Example&nbsp;
        <Icon name="closeBold" size={15} />
      </SlantTab>
      <TabTools>
        {[["prevTab", "Previous"], ["nextTab", "Next"], ["listTabs", "List"]].map(([name, label]) => (
          <IconButton key={name} aria-label={label} $width={18}>
            <Icon name={name} />
          </IconButton>
        ))}
      </TabTools>
    </TabStrip>
    <DiagramToolbar>
      <ToolGroup $height={28}>
        <ToolButtons items={[["back", "Back", false, true], ["forward", "Forward", false, true]]} />
      </ToolGroup>
      {diagramTools.map((items, index) => (
        <ToolGroup key={index} $height={28}>
          <Grip />
          <ToolButtons items={items} />
        </ToolGroup>
      ))}
      <ToolGroup $height={28}>
        <Grip />
        <ToolButtons items={[["bucket", "Fill Color", true, true], ["pen", "Pen Color", true, true], ["fontColor", "Font Color", true, true]]} />
        <SelectBox $width={198} $height={26} $off>
          <select aria-label="Font" disabled />
          <Icon name="chevron" />
        </SelectBox>
        <SelectBox $width={43} $height={26} $off>
          <select aria-label="Font size" disabled />
          <Icon name="chevron" />
        </SelectBox>
        <ToolButtons items={[["copyStyle", "Copy Style", false, true], ["pasteStyle", "Paste Style", false, true]]} />
      </ToolGroup>
      {trailingTools.map((items, index) => (
        <ToolGroup key={index} $height={28}>
          <Grip />
          <ToolButtons items={items} />
        </ToolGroup>
      ))}
      <Marker $left={-2} $bottom={-2} $width={1090} />
      <Label $top={-37} $left="835px">Diagram Toolbar</Label>
    </DiagramToolbar>
    <DiagramBody>
      <Palette>
        <PaletteTitle>Selection</PaletteTitle>
        <PaletteTools>
          <SelectTool aria-label="Selection">
            <Icon name="cursor" />
          </SelectTool>
          <ToolButtons items={[["marquee", "Marquee"], ["marqueeAll", "Select All", true]]} />
        </PaletteTools>
        <PaletteTitle>Tools</PaletteTitle>
        <PaletteTools>
          <ToolButtons items={[["stamp", "Stamp"], ["spread", "Spread"], ["shrink", "Shrink"]]} />
        </PaletteTools>
        <PaletteTitle>Concept Modeling</PaletteTitle>
        {paletteItems.map(([icon, name, caret]) => (
          <PaletteItem key={name}>
            <Icon name={icon} />
            {name}
            {caret && <ItemCaret />}
          </PaletteItem>
        ))}
        <MoreButton aria-label="Scroll up" />
        <Marker $left={1} />
      </Palette>
      <CanvasColumn>
        <Canvas>
          <DiagramFrame>
            <FrameTitle>
              <svg width="270" height="33">
                <path d="M0 32h257l12-12V0" fill="none" stroke="#333" />
              </svg>
              <FrameText>
                <FrameKind>package</FrameKind>Example[
                <Icon name="diagramFile" size={23} />
                {"Example ]"}
              </FrameText>
            </FrameTitle>
          </DiagramFrame>
          <ClassNode>
            <span>«Anything»</span>
            <b>Thing</b>
          </ClassNode>
          <NoteNode>
            <svg width="324" height="191">
              <defs>
                <linearGradient id="note" x1="0" y1="0" x2="1" y2="0.500">
                  <stop offset="0" stopColor="#fff0b0" />
                  <stop offset="1" stopColor="#fffdf4" />
                </linearGradient>
              </defs>
              <path d="M4 26h320v165H4z" fill="#b0b0b0" />
              <path d="M.5 .5h297l22 22v164H.5z" fill="url(#note)" stroke="#8f8650" />
              <path d="M297.500 .5v22h22z" fill="#fffdf0" stroke="#8f8650" />
            </svg>
            <NoteText>
              Welcome to the Cameo Concept
              <br />
              Modeler (CCM)!
              <br />
              <br />
              To read about what CCM does and
              <br />
              how to use it, please open the
              <br />
              documentation under the Help menu,
              <br />
              or simply <a href="#help">click here</a>.
            </NoteText>
          </NoteNode>
          <Marker $left={1} $right={6} $top={-1} />
          <Label $top={408} $left="196px">Diagram Pane</Label>
        </Canvas>
        <HorizontalScroll>
          <IconButton aria-label="Scroll left" $width={20}>
            <Icon name="left" />
          </IconButton>
          <IconButton aria-label="Scroll right" $width={20}>
            <Icon name="right" />
          </IconButton>
        </HorizontalScroll>
      </CanvasColumn>
      <VerticalScroll>
        <IconButton aria-label="Scroll up" $width={20}>
          <Icon name="up" />
        </IconButton>
        <IconButton aria-label="Scroll down" $width={20}>
          <Icon name="down" />
        </IconButton>
      </VerticalScroll>
    </DiagramBody>
  </DiagramWindow>
);

/* ---------- notification window ---------- */

const Bottom = styled.div`
  position: relative;
`;

const Notification = styled.section`
  padding: 6px 2px 0 1px;
  background: ${BLUE};
`;

const WarmFrame = styled.div`
  padding: 3px 2px 3px;
  border: 1px solid #999;
  border-left: 0;
  background: #fccf76;
`;

const NotificationBody = styled.div`
  display: flex;
  height: 111px;
  background: #efefef;
`;

const SideTabs = styled.div`
  display: flex;
  flex: none;
  flex-direction: column;
  width: 22px;
  padding: 4px 0 4px 2px;
`;

const SideTab = styled.button`
  ${plainButton}
  justify-content: center;
  width: 20px;
  height: ${(p) => (p.$on ? 60 : 43)}px;
  padding-top: 2px;
  border: 1px solid #999;
  border-right: 0;
  border-radius: 3px 0 0 3px;
  background: ${(p) => (p.$on ? "linear-gradient(to right, #fff3bd, #f8cf7a)" : BLUE)};
  ${(p) => p.$on && "border-top: 0; clip-path: polygon(0 20px, 20px 0, 100% 100%, 0 100%); border-radius: 0; padding-top: 22px;"}
  font-weight: ${(p) => (p.$on ? 700 : 400)};

  span {
    writing-mode: vertical-rl;
    transform: rotate(180deg);
  }
`;

const Messages = styled.div`
  flex: 1;
  padding: 2px;
  border: 1px solid #999;
  background: #fccf76;

  &::before {
    content: "";
    display: block;
    height: 100%;
    border: 1px solid #777;
    background: #fff;
  }
`;

const StatusBar = styled.footer`
  display: flex;
  align-items: center;
  height: 24px;
  padding-left: 3px;
  border-top: 1px solid #5b86c0;
  background: linear-gradient(#e6f0ff, #c8dcf8 40%, #aeccf2 45%, #cfe2fb);
`;

const Divider = styled.span`
  width: 2px;
  height: 20px;
  border-left: 1px solid #8fa9cd;
  background: #fff;
`;

const ZoomSlider = styled.input`
  appearance: none;
  width: 190px;
  height: 20px;
  margin: 0;
  background: linear-gradient(#e4e4e4, #e4e4e4) center / 100% 3px no-repeat;

  &::-webkit-slider-thumb {
    appearance: none;
    width: 5px;
    height: 20px;
    background: #0078d7;
  }
`;

const StatusGap = styled.span`
  width: 10px;
`;

const NotificationArea = () => (
  <Bottom>
    <Notification>
      <TabStrip $height={28}>
        <SlantTab fill="warm" $start={3} $end={7} $gap={5}>
          <Icon name="mail" />
          Notification Window
        </SlantTab>
      </TabStrip>
      <WarmFrame>
        <PanelHeader $warm>
          Notification Window
          <HeaderTools />
        </PanelHeader>
        <IconRow>
          <ToolButtons
            items={[
              ["tools", "Options"],
              ["upDouble", "Previous", false, true],
              ["downDouble", "Next", false, true],
              ["mailLock", "Lock"],
              ["mailErase", "Clear"],
              ["mailClock", "History"],
            ]}
          />
        </IconRow>
        <NotificationBody>
          <SideTabs>
            <SideTab $on>
              <span>Pro..</span>
            </SideTab>
            <SideTab>
              <span>Envi..</span>
            </SideTab>
          </SideTabs>
          <Messages />
        </NotificationBody>
      </WarmFrame>
    </Notification>
    <StatusBar>
      Ready
      <Spacer />
      <Divider />
      <IconButton aria-label="Zoom out" $width={44}>
        <Icon name="zoomOut" />
      </IconButton>
      <ZoomSlider type="range" min="0" max="100" defaultValue="51" aria-label="Zoom" />
      <IconButton aria-label="Zoom in" $width={32}>
        <Icon name="zoomIn" />
      </IconButton>
      <SelectBox $width={56} $height={20}>
        <select aria-label="Zoom level">
          <option>118%</option>
        </select>
        <Icon name="chevron" />
      </SelectBox>
      <ToolButtons items={[["zoomFit", "Fit in Window"], ["zoomReal", "Actual Size"]]} />
      <StatusGap />
      <Divider />
      <IconButton aria-label="Progress" $width={53}>
        <Icon name="spinner" />
      </IconButton>
    </StatusBar>
    <Marker $top={-3} $right={-4} $left={-1} />
    <Label $top={120} $left="176px" $size={32}>Notification Window</Label>
  </Bottom>
);

const App = () => (
  <Desktop>
    <GlobalStyle />
    <Menu />
    <Toolbar />
    <Workspace>
      <LeftColumn />
      <DiagramArea />
    </Workspace>
    <NotificationArea />
  </Desktop>
);

export default App;
